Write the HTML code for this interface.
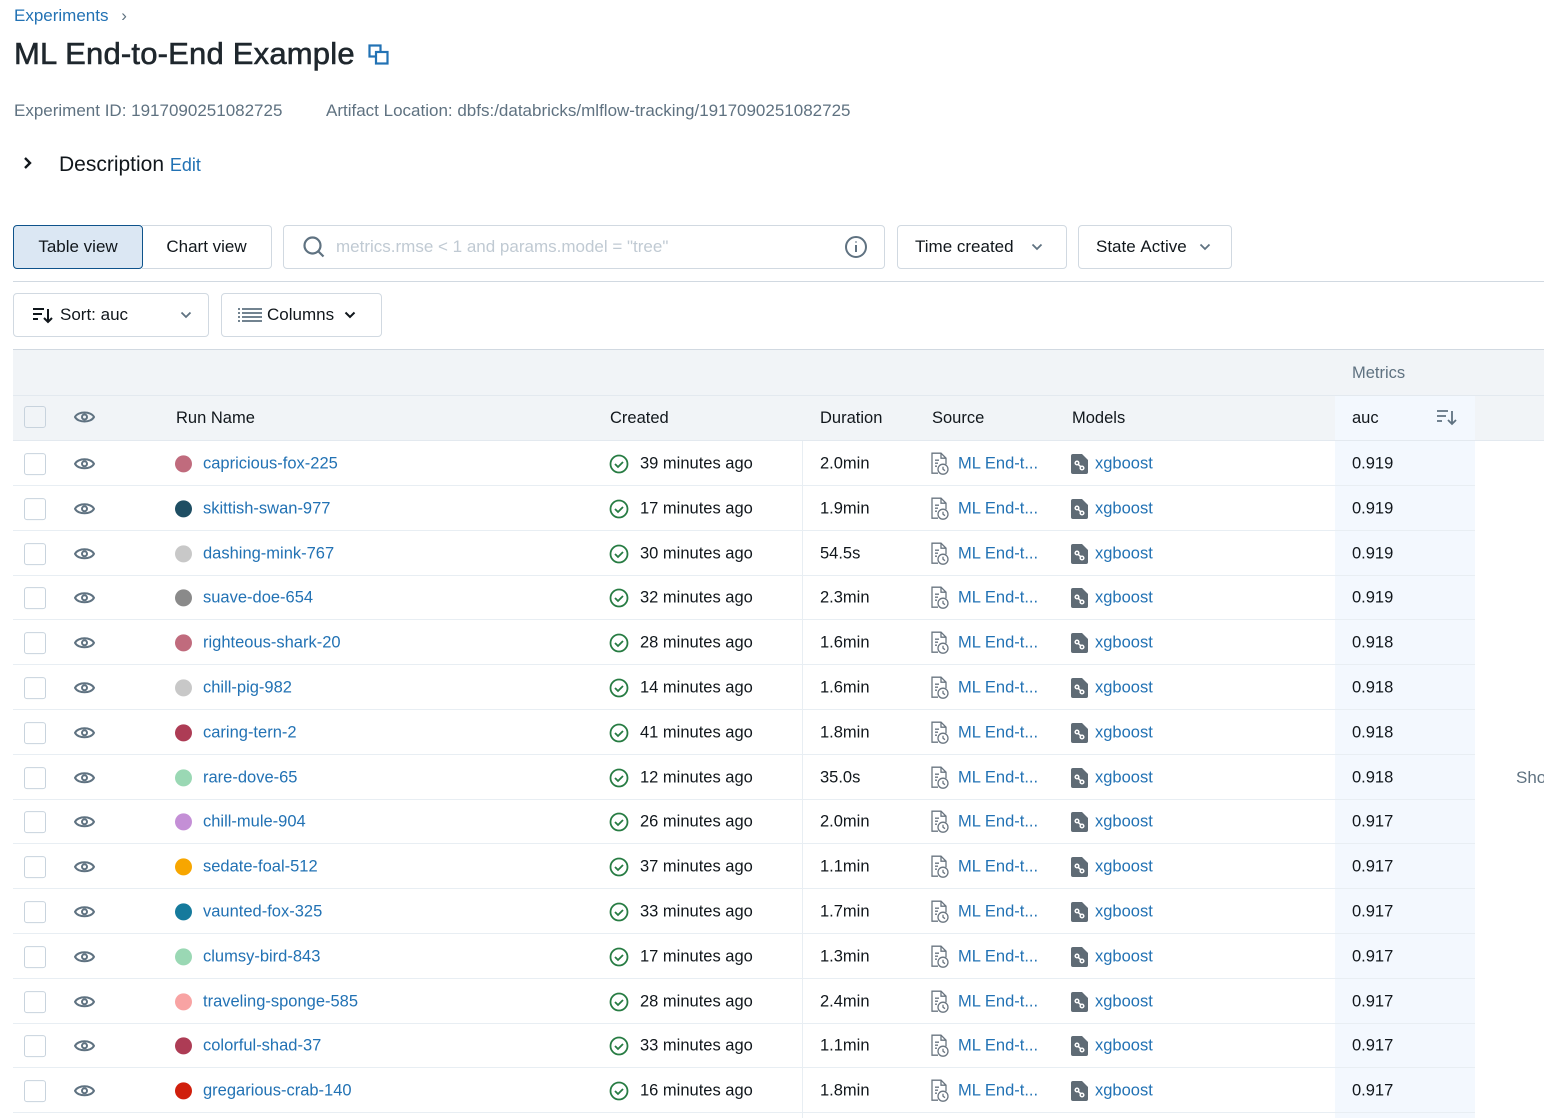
<!DOCTYPE html>
<html><head><meta charset="utf-8"><style>
*{margin:0;padding:0;box-sizing:border-box}
body{width:1544px;height:1118px;overflow:hidden;background:#fff;font-family:"Liberation Sans",sans-serif;color:#11171c;position:relative}
.a{position:absolute;white-space:nowrap}
.lk{color:#2272b4}
.btn{position:absolute;border:1px solid #d1d9e1;border-radius:4px;height:44px;font-size:17px;display:flex;align-items:center}
.row{position:absolute;left:13px;width:1462px;height:45px;border-bottom:1px solid #e8eef3;font-size:16.5px}
.row>*{position:absolute;top:50%;transform:translateY(-45%)}
.cb{left:11px;width:22px;height:22px;border:1.5px solid #c8d3dd;border-radius:3px;background:#fff}
.dot{left:162px;width:17px;height:17px;border-radius:50%}
.mbg{position:absolute;left:1335px;width:140px;background:#f3f8fe}
</style></head><body>
<div class="a lk" style="left:14px;top:6px;font-size:17px">Experiments <span style="color:#5f7281;margin-left:8px">&#x203A;</span></div>
<div class="a" style="left:14px;top:36px;font-size:31px;letter-spacing:0.2px;-webkit-text-stroke:0.6px #1f272d;color:#1f272d">ML End-to-End Example</div>
<svg class="a" style="left:368px;top:44px" width="22" height="22" viewBox="0 0 22 22" fill="none" stroke="#2272b4" stroke-width="2.2"><rect x="1.5" y="1.5" width="11" height="11"/><rect x="8" y="8" width="11.5" height="11.5" fill="#fff"/></svg>
<div class="a" style="left:14px;top:101px;font-size:17px;color:#5f7281">Experiment ID: 1917090251082725</div>
<div class="a" style="left:326px;top:101px;font-size:17px;color:#5f7281">Artifact Location: dbfs:/databricks/mlflow-tracking/1917090251082725</div>
<svg class="a" style="left:22px;top:156px" width="12" height="14" viewBox="0 0 12 14"><path d="M3 2l5 5-5 5" fill="none" stroke="#11171c" stroke-width="2.4"/></svg>
<div class="a" style="left:59px;top:153px;font-size:21px">Description <span class="lk" style="font-size:18px">Edit</span></div>

<div class="btn" style="left:13px;top:225px;width:130px;background:#dbe7f3;border-color:#0e538b;justify-content:center">Table view</div>
<div class="btn" style="left:142px;top:225px;width:130px;border-left:none;border-radius:0 4px 4px 0;justify-content:center">Chart view</div>
<div class="btn" style="left:283px;top:225px;width:602px">
<svg style="margin-left:18px" width="24" height="24" viewBox="0 0 24 24" fill="none" stroke="#5f7281" stroke-width="2.2"><circle cx="10.5" cy="10.5" r="8"/><path d="M16.5 16.5l5 5"/></svg>
<span style="margin-left:10px;color:#c0cad3">metrics.rmse &lt; 1 and params.model = "tree"</span>
<svg style="position:absolute;right:16px" width="24" height="24" viewBox="0 0 24 24" fill="none" stroke="#5f7281" stroke-width="2"><circle cx="12" cy="12" r="10"/><path d="M12 10v7M12 6.5v1"/></svg></div>
<div class="btn" style="left:897px;top:225px;width:170px;padding-left:17px">Time created<svg style="margin-left:17px" width="12" height="8" viewBox="0 0 12 8"><path d="M1.5 1.5l4.5 4.5 4.5-4.5" fill="none" stroke="#5f7281" stroke-width="1.8"/></svg></div>
<div class="btn" style="left:1078px;top:225px;width:154px;padding-left:17px"><b style="font-weight:500">State</b>&nbsp;Active<svg style="margin-left:12px" width="12" height="8" viewBox="0 0 12 8"><path d="M1.5 1.5l4.5 4.5 4.5-4.5" fill="none" stroke="#5f7281" stroke-width="1.8"/></svg></div>
<div class="a" style="left:13px;top:281px;width:1531px;height:1px;background:#d1d9e1"></div>

<div class="btn" style="left:13px;top:293px;width:196px;padding-left:18px">
<svg width="22" height="18" viewBox="0 0 22 18" fill="none" stroke="#11171c" stroke-width="2"><path d="M1 3h11M1 8h9M1 13h5M16 3v13M12 12l4 4 4-4"/></svg>
<span style="margin-left:6px">Sort: auc</span>
<svg style="position:absolute;right:16px" width="12" height="8" viewBox="0 0 12 8"><path d="M1.5 1.5l4.5 4.5 4.5-4.5" fill="none" stroke="#5f7281" stroke-width="1.8"/></svg></div>
<div class="btn" style="left:221px;top:293px;width:161px;padding-left:16px">
<svg width="24" height="16" viewBox="0 0 24 16" stroke="#5f7281" stroke-width="1.8"><path d="M0 2h2M0 6h2M0 10h2M0 14h2M4 2h20M4 6h20M4 10h20M4 14h20"/></svg>
<span style="margin-left:5px">Columns</span>
<svg style="margin-left:10px" width="12" height="8" viewBox="0 0 12 8"><path d="M1.5 1.5l4.5 4.5 4.5-4.5" fill="none" stroke="#11171c" stroke-width="2"/></svg></div>

<div class="a" style="left:13px;top:349px;width:1531px;height:92px;background:#f1f4f7;border-top:1px solid #d1d9e1"></div>
<div class="a" style="left:13px;top:395px;width:1531px;height:1px;background:#e3e9ef"></div>
<div class="a" style="left:13px;top:440px;width:1531px;height:1px;background:#e3e9ef"></div>
<div class="a" style="left:1335px;top:396px;width:140px;height:44px;background:#f3f8fe"></div>
<div class="a" style="left:1352px;top:364px;font-size:16.5px;color:#5f7281">Metrics</div>
<div class="a" style="left:24px;top:406px;width:22px;height:22px;border:1.5px solid #c8d3dd;border-radius:3px;background:#f1f4f7"></div>
<svg class="a" style="left:74px;top:409px" width="21" height="16" viewBox="0 0 21 16" fill="none" stroke="#5f7281" stroke-width="2"><path d="M1 8C4 2 17 2 20 8 17 14 4 14 1 8z"/><circle cx="10.5" cy="8" r="2.5"/></svg>
<div class="a" style="left:176px;top:409px;font-size:16.5px;font-weight:500">Run Name</div>
<div class="a" style="left:610px;top:409px;font-size:16.5px;font-weight:500">Created</div>
<div class="a" style="left:820px;top:409px;font-size:16.5px;font-weight:500">Duration</div>
<div class="a" style="left:932px;top:409px;font-size:16.5px;font-weight:500">Source</div>
<div class="a" style="left:1072px;top:409px;font-size:16.5px;font-weight:500">Models</div>
<div class="a" style="left:1352px;top:409px;font-size:16.5px;font-weight:500">auc</div>
<svg class="a" style="left:1436px;top:408px" width="22" height="18" viewBox="0 0 22 18" fill="none" stroke="#5f7281" stroke-width="1.8"><path d="M1 3h11M1 8h9M1 13h5M16 3v13M12 12l4 4 4-4"/></svg>

<div class="mbg" style="top:441px;height:677px"></div>
<div class="a" style="left:802px;top:441px;width:1px;height:677px;background:#e8eef3"></div>
<div class="a" style="left:1516px;top:768px;font-size:17px;color:#5f7281">Sho</div>

<div id="rows"></div>
<script>
var d=[["capricious-fox-225","#c06b7d","39","2.0min","0.919"],["skittish-swan-977","#1e4e63","17","1.9min","0.919"],["dashing-mink-767","#c8c8c8","30","54.5s","0.919"],["suave-doe-654","#8a8a8a","32","2.3min","0.919"],["righteous-shark-20","#c06b7d","28","1.6min","0.918"],["chill-pig-982","#c8c8c8","14","1.6min","0.918"],["caring-tern-2","#ad3c55","41","1.8min","0.918"],["rare-dove-65","#9ad8b4","12","35.0s","0.918"],["chill-mule-904","#c48fd6","26","2.0min","0.917"],["sedate-foal-512","#f7a600","37","1.1min","0.917"],["vaunted-fox-325","#157a9c","33","1.7min","0.917"],["clumsy-bird-843","#9ad8b4","17","1.3min","0.917"],["traveling-sponge-585","#f8a3a3","28","2.4min","0.917"],["colorful-shad-37","#ad3c55","33","1.1min","0.917"],["gregarious-crab-140","#d01f0c","16","1.8min","0.917"]];
var h="";
d.forEach(function(r,i){var t=441+44.8*i;
h+='<div class="row" style="top:'+t+'px"><div class="cb"></div>'+
'<svg style="left:61px" width="21" height="16" viewBox="0 0 21 16" fill="none" stroke="#5f7281" stroke-width="2"><path d="M1 8C4 2 17 2 20 8 17 14 4 14 1 8z"/><circle cx="10.5" cy="8" r="2.5"/></svg>'+
'<div class="dot" style="background:'+r[1]+'"></div><span class="lk" style="left:190px">'+r[0]+'</span>'+
'<svg style="left:596px" width="20" height="20" viewBox="0 0 20 20" fill="none" stroke="#277c43" stroke-width="1.8"><circle cx="10" cy="10" r="8.5"/><path d="M6 10l3 3 5-5"/></svg>'+
'<span style="left:627px">'+r[2]+' minutes ago</span><span style="left:807px">'+r[3]+'</span>'+
'<svg style="left:917px" width="20" height="24" viewBox="0 0 20 24" fill="none" stroke="#6a7580" stroke-width="1.3"><path d="M8 21H2V1h9l5 5v6"/><path d="M11 1v5h5M5 8h4M5 11h3M5 14h2"/><circle cx="13" cy="17" r="5"/><path d="M13 14.5V17l2 1.5"/></svg>'+
'<span class="lk" style="left:945px">ML End-t...</span>'+
'<svg style="left:1058px" width="17" height="20" viewBox="0 0 17 20"><path d="M0 2a2 2 0 012-2h9l6 6v12a2 2 0 01-2 2H2a2 2 0 01-2-2z" fill="#5f6b75"/><g stroke="#fff" stroke-width="1.5" fill="none"><circle cx="6" cy="9" r="1.8"/><circle cx="11" cy="14" r="1.8"/><path d="M7.2 10.3l2.6 2.5"/></g></svg>'+
'<span class="lk" style="left:1082px">xgboost</span><span style="left:1339px">'+r[4]+'</span></div>';});
document.getElementById("rows").innerHTML=h;
</script>
</body></html>
